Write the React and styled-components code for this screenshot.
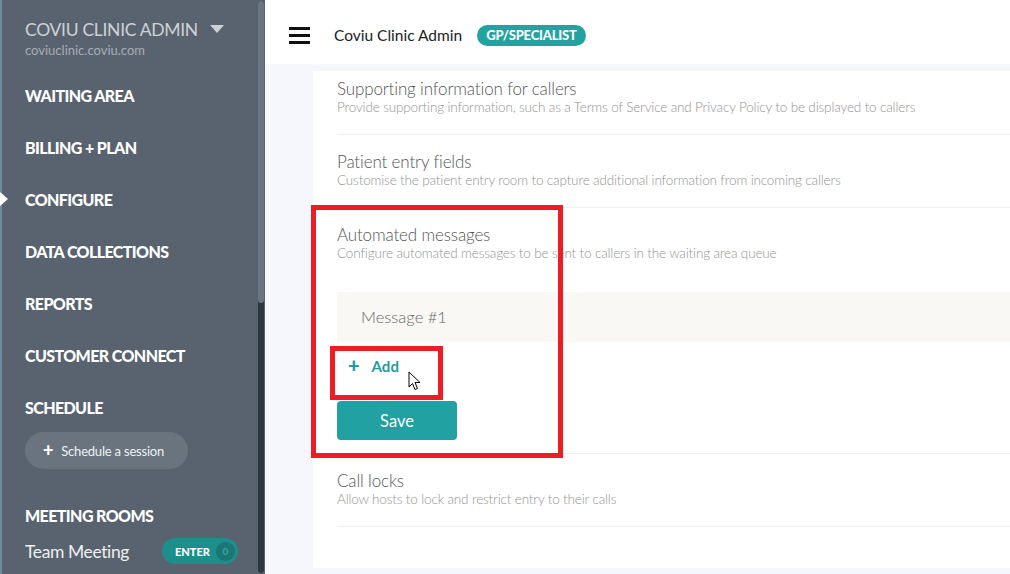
import React from "react";
import styled, { createGlobalStyle } from "styled-components";

const GlobalStyle = createGlobalStyle`
  html, body {
    margin: 0;
    padding: 0;
    background: #f6f7fc;
    font-family: Lato, "Open Sans", sans-serif;
  }
  * { box-sizing: border-box; }
`;

const navItems = [
  "WAITING AREA",
  "BILLING + PLAN",
  "CONFIGURE",
  "DATA COLLECTIONS",
  "REPORTS",
  "CUSTOMER CONNECT",
  "SCHEDULE",
];

const sections = [
  {
    title: "Supporting information for callers",
    text: "Provide supporting information, such as a Terms of Service and Privacy Policy to be displayed to callers",
    first: true,
  },
  {
    title: "Patient entry fields",
    text: "Customise the patient entry room to capture additional information from incoming callers",
  },
];

const App = () => {
  return (
    <Page>
      <GlobalStyle />
      <Sidebar>
        <SideContent>
          <ClinicRow>
            <ClinicName>COVIU CLINIC ADMIN</ClinicName>
            <Caret />
          </ClinicRow>
          <ClinicUrl>coviuclinic.coviu.com</ClinicUrl>
          <Nav>
            {navItems.map((item) => (
              <NavItem key={item} $active={item === "CONFIGURE"}>
                {item}
              </NavItem>
            ))}
          </Nav>
          <ScheduleButton>
            <PlusMark>+</PlusMark> Schedule a session
          </ScheduleButton>
          <RoomsHeading>MEETING ROOMS</RoomsHeading>
          <RoomRow>
            <RoomName>Team Meeting</RoomName>
            <EnterPill>
              ENTER <Count>0</Count>
            </EnterPill>
          </RoomRow>
        </SideContent>
        <ScrollTrack>
          <ScrollThumb />
        </ScrollTrack>
      </Sidebar>

      <Main>
        <Header>
          <Hamburger>
            <span />
            <span />
            <span />
          </Hamburger>
          <HeaderTitle>Coviu Clinic Admin</HeaderTitle>
          <Badge>GP/SPECIALIST</Badge>
        </Header>
        <Body>
          <Card>
            {sections.map((s) => (
              <Section key={s.title} $pt={s.first ? 9 : 18}>
                <Title>{s.title}</Title>
                <Sub>{s.text}</Sub>
              </Section>
            ))}
            <Section $pb={13}>
              <Title>Automated messages</Title>
              <Sub>Configure automated messages to be sent to callers in the waiting area queue</Sub>
              <MessageBox>Message #1</MessageBox>
              <AddButton>
                <AddPlus>+</AddPlus>
                Add
              </AddButton>
              <SaveButton>Save</SaveButton>
            </Section>
            <Section>
              <Title>Call locks</Title>
              <Sub>Allow hosts to lock and restrict entry to their calls</Sub>
            </Section>
          </Card>
        </Body>
      </Main>

      <Highlight style={{ left: 311, top: 205, width: 252, height: 253 }} />
      <Highlight style={{ left: 330, top: 346, width: 113, height: 54 }} />
      <Cursor width="14" height="20" viewBox="0 0 14 20">
        <path
          d="M1 1 L1 16 L4.5 12.5 L7 18.5 L9.5 17.5 L7 11.5 L12 11.5 Z"
          fill="#fff"
          stroke="#000"
          strokeWidth="1"
          strokeLinejoin="miter"
        />
      </Cursor>
    </Page>
  );
};

const Page = styled.div`
  position: relative;
  display: flex;
  width: 1010px;
  height: 574px;
  overflow: hidden;
`;

const Sidebar = styled.aside`
  display: flex;
  width: 265px;
  flex-shrink: 0;
  background: #59636f;
  border-left: 2px solid #6f8aa3;
`;

const SideContent = styled.div`
  flex: 1;
  padding: 18px 0 0 23px;
  display: flex;
  flex-direction: column;
`;

const ClinicRow = styled.div`
  display: flex;
  align-items: center;
  gap: 12px;
`;

const ClinicName = styled.div`
  font-size: 17.5px;
  font-weight: 400;
  color: #cdd1d6;
  letter-spacing: -0.3px;
  line-height: 24px;
`;

const Caret = styled.div`
  width: 0;
  height: 0;
  border-left: 7.5px solid transparent;
  border-right: 7.5px solid transparent;
  border-top: 8px solid #cdd1d6;
  margin-top: -2px;
`;

const ClinicUrl = styled.div`
  font-size: 13px;
  color: #a6adb5;
  line-height: 16px;
`;

const Nav = styled.nav`
  display: flex;
  flex-direction: column;
  margin-top: 11px;
`;

const NavItem = styled.div`
  position: relative;
  height: 52px;
  display: flex;
  align-items: center;
  font-size: 16px;
  font-weight: 900;
  color: #fff;
  letter-spacing: -0.6px;

  ${(p) =>
    p.$active &&
    `
    &::before {
      content: "";
      position: absolute;
      left: -25px;
      top: 50%;
      margin-top: -7px;
      border-top: 7px solid transparent;
      border-bottom: 7px solid transparent;
      border-left: 8px solid #fff;
    }
  `}
`;

const ScheduleButton = styled.div`
  align-self: flex-start;
  margin-top: -1px;
  height: 37px;
  width: 163px;
  padding-left: 18px;
  border-radius: 19px;
  background: #69747f;
  color: #eef0f2;
  font-size: 13px;
  letter-spacing: -0.2px;
  display: flex;
  align-items: center;
  gap: 8px;
`;

const PlusMark = styled.span`
  font-size: 18px;
  font-weight: 900;
  color: #fff;
  line-height: 1;
  margin-top: -2px;
`;

const RoomsHeading = styled.div`
  margin-top: 37px;
  font-size: 16px;
  font-weight: 900;
  color: #fff;
  letter-spacing: -0.6px;
  line-height: 20px;
`;

const RoomRow = styled.div`
  margin-top: 12px;
  display: flex;
  align-items: center;
  gap: 33px;
`;

const RoomName = styled.div`
  font-size: 17.5px;
  color: #eef0f2;
  letter-spacing: -0.4px;
`;

const EnterPill = styled.div`
  height: 26px;
  padding: 0 3px 0 13px;
  border-radius: 13px;
  background: #1e8e8b;
  color: #fff;
  font-size: 11px;
  font-weight: 900;
  display: flex;
  align-items: center;
  gap: 6px;
`;

const Count = styled.span`
  width: 19px;
  height: 19px;
  border-radius: 50%;
  background: #1a7774;
  color: #3aa19e;
  font-size: 10px;
  display: flex;
  align-items: center;
  justify-content: center;
`;

const ScrollTrack = styled.div`
  width: 6px;
  margin: 1px 1px 1px 0;
  border-radius: 3px;
  background: #2f363e;
  display: flex;
  flex-direction: column;
`;

const ScrollThumb = styled.div`
  height: 302px;
  border-radius: 3px;
  background: #6b7582;
`;

const Main = styled.main`
  flex: 1;
  display: flex;
  flex-direction: column;
  background: #f6f7fc;
`;

const Header = styled.header`
  height: 64px;
  background: #fff;
  display: flex;
  align-items: center;
  padding: 6px 0 0 24px;
`;

const Hamburger = styled.div`
  width: 21px;
  display: flex;
  flex-direction: column;
  gap: 4px;
  margin-right: 24px;

  span {
    display: block;
    height: 3px;
    background: #111;
  }
`;

const HeaderTitle = styled.div`
  font-size: 15.5px;
  color: #222;
  letter-spacing: 0;
`;

const Badge = styled.div`
  margin-left: 15px;
  height: 21px;
  padding: 0 9px;
  border-radius: 11px;
  background: #22a3a0;
  color: #fff;
  font-size: 13px;
  font-weight: 900;
  letter-spacing: -0.2px;
  display: flex;
  align-items: center;
`;

const Body = styled.div`
  flex: 1;
  padding: 7px 0 6px 48px;
  display: flex;
`;

const Card = styled.div`
  flex: 1;
  background: #fff;
  padding-left: 24px;
  display: flex;
  flex-direction: column;
`;

const Section = styled.section`
  padding: ${(p) => p.$pt ?? 18}px 0 ${(p) => p.$pb ?? 18}px;
  border-bottom: 1px solid #f0f0f0;
  display: flex;
  flex-direction: column;
`;

const Title = styled.div`
  font-size: 17px;
  font-weight: 300;
  color: #555;
  line-height: 18px;
  letter-spacing: -0.15px;
`;

const Sub = styled.div`
  font-size: 13.5px;
  font-weight: 300;
  color: #939393;
  line-height: 18px;
  letter-spacing: -0.15px;
`;

const MessageBox = styled.div`
  margin-top: 30px;
  height: 50px;
  background: #f9f8f5;
  display: flex;
  align-items: center;
  padding-left: 24px;
  font-size: 16.5px;
  font-weight: 300;
  color: #666;
`;

const AddButton = styled.div`
  height: 48px;
  padding-left: 11px;
  display: flex;
  align-items: center;
  gap: 12px;
  font-size: 15px;
  font-weight: 700;
  color: #1f9c9c;
`;

const AddPlus = styled.span`
  font-size: 20px;
  font-weight: 900;
  line-height: 1;
  margin-top: -2px;
`;

const SaveButton = styled.div`
  margin-top: 11px;
  width: 120px;
  height: 39px;
  border-radius: 4px;
  background: #21a1a1;
  color: #fff;
  font-size: 16.5px;
  display: flex;
  align-items: center;
  justify-content: center;
`;

const Highlight = styled.div`
  position: absolute;
  border: 5px solid #ee1d25;
  pointer-events: none;
`;

const Cursor = styled.svg`
  position: absolute;
  left: 408px;
  top: 371px;
`;

export default App;
